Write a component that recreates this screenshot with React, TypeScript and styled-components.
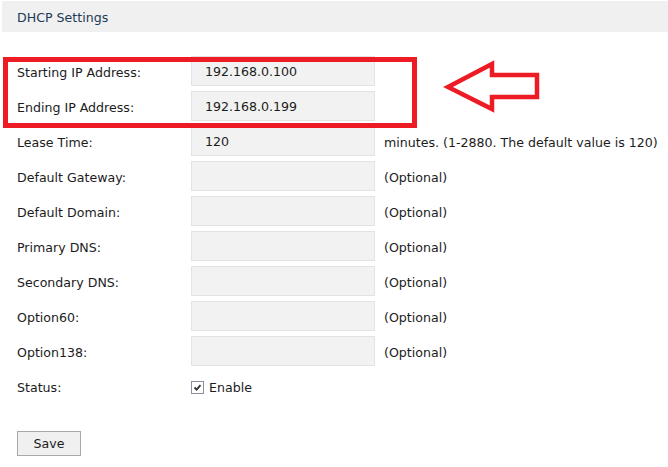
import styled, { createGlobalStyle } from "styled-components";

const GlobalStyle = createGlobalStyle`
  body {
    margin: 0;
    background: #fff;
  }
`;

const Page = styled.div`
  position: relative;
  width: 668px;
  height: 467px;
  padding: 1px 0 0 2px;
  box-sizing: border-box;
  font-family: Tahoma, "DejaVu Sans", sans-serif;
  font-size: 12.6px;
  color: #1c1c1c;
`;

const Header = styled.div`
  height: 31px;
  padding: 4px 0 0 15px;
  box-sizing: border-box;
  line-height: 26px;
  background: #f0f0f0;
  color: #1d3a57;
`;

const Form = styled.div`
  display: grid;
  grid-template-columns: 180px 184px auto;
  grid-auto-rows: 30px;
  row-gap: 5px;
  column-gap: 9px;
  margin-top: 24px;
  align-items: center;
`;

const Label = styled.div`
  padding: 2px 0 0 15px;
`;

const Field = styled.div`
  height: 30px;
  padding: 3px 0 0 13px;
  box-sizing: border-box;
  line-height: 24px;
  border: 1px solid #e3e3e3;
  background: #f2f2f2;
`;

const Hint = styled.div`
  padding-top: 2px;
  white-space: nowrap;
`;

const CheckLine = styled.label`
  display: flex;
  align-items: center;
  gap: 5px;
  padding-top: 2px;
`;

const Check = styled.span`
  display: inline-flex;
  align-items: center;
  justify-content: center;
  width: 11px;
  height: 11px;
  border: 1px solid #8f8f9d;
  background: #fff;
`;

const SaveButton = styled.button`
  display: block;
  width: 64px;
  height: 25px;
  margin: 30px 0 0 15px;
  border: 1px solid #a8a8a8;
  background: #f0f0f0;
  font: inherit;
  color: #1c1c1c;
`;

// red call-out drawn on top of the address range rows
const Callout = styled.div`
  position: absolute;
  left: 3px;
  top: 57px;
  width: 414px;
  height: 71px;
  border: 5px solid #ed1c24;
  box-sizing: border-box;
  pointer-events: none;
`;

const Arrow = styled.svg`
  position: absolute;
  left: 440px;
  top: 58px;
`;

const rows: { label: string; value?: string; hint?: string }[] = [
  { label: "Starting IP Address:", value: "192.168.0.100" },
  { label: "Ending IP Address:", value: "192.168.0.199" },
  { label: "Lease Time:", value: "120", hint: "minutes. (1-2880. The default value is 120)" },
  { label: "Default Gateway:", hint: "(Optional)" },
  { label: "Default Domain:", hint: "(Optional)" },
  { label: "Primary DNS:", hint: "(Optional)" },
  { label: "Secondary DNS:", hint: "(Optional)" },
  { label: "Option60:", hint: "(Optional)" },
  { label: "Option138:", hint: "(Optional)" },
];

const App = () => {
  return (
    <Page>
      <GlobalStyle />
      <Header>DHCP Settings</Header>
      <Form>
        {rows.map((r) => (
          <>
            <Label key={r.label}>{r.label}</Label>
            <Field>{r.value}</Field>
            <Hint>{r.hint}</Hint>
          </>
        ))}
        <Label>Status:</Label>
        <CheckLine>
          <Check>
            <svg width="9" height="9" viewBox="0 0 9 9">
              <path d="M1.5 4.5 L3.6 6.6 L7.5 2.2" fill="none" stroke="#333" strokeWidth="1.8" />
            </svg>
          </Check>
          Enable
        </CheckLine>
        <div />
      </Form>
      <SaveButton>Save</SaveButton>
      <Callout />
      <Arrow width="104" height="56" viewBox="0 0 104 56">
        <polygon
          points="8,29 52,6 52,17 97,17 97,39 52,39 52,51"
          fill="none"
          stroke="#ed1c24"
          strokeWidth="4.5"
          strokeLinejoin="miter"
        />
      </Arrow>
    </Page>
  );
};

export default App;
